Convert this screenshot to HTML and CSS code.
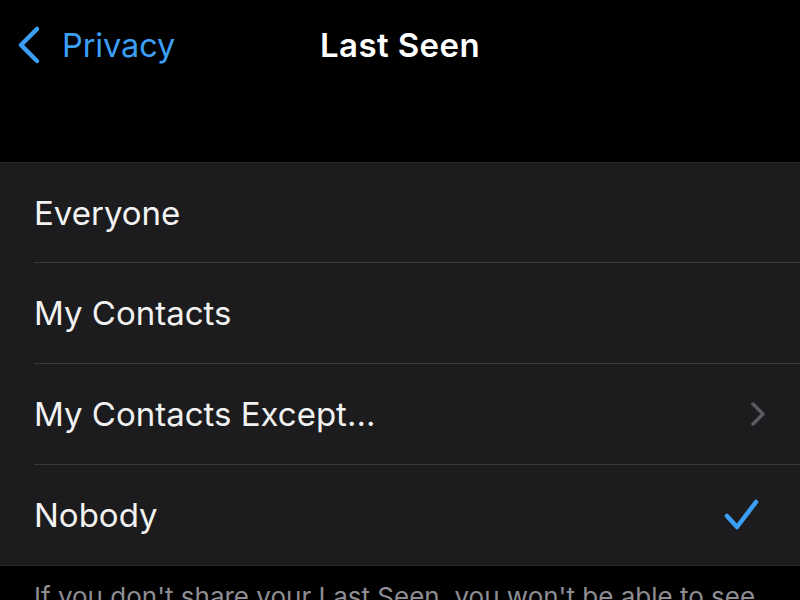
FILE: index.html
```html
<!DOCTYPE html>
<html>

<head>
    <title>Last Seen</title>
    <link rel="stylesheet" href="styles.css">
</head>

<body>
    <nav class="navbar">
        <a class="back" href="#">
            <svg class="back-icon" width="26" height="40" viewBox="0 0 26 40">
                <path d="M21 4 L5 20 L21 36" fill="none" stroke="#3a9ff5" stroke-width="4.5" stroke-linecap="round" stroke-linejoin="round"/>
            </svg>
            <span>Privacy</span>
        </a>
        <h1 class="title">Last Seen</h1>
    </nav>

    <ul class="options">
        <li class="option"><span class="label">Everyone</span></li>
        <li class="option"><span class="label">My Contacts</span></li>
        <li class="option">
            <span class="label">My Contacts Except...</span>
            <svg class="chevron" width="16" height="26" viewBox="0 0 16 26">
                <path d="M3 3 L13 13 L3 23" fill="none" stroke="#5a5a5f" stroke-width="3.5" stroke-linecap="round" stroke-linejoin="round"/>
            </svg>
        </li>
        <li class="option">
            <span class="label">Nobody</span>
            <svg class="check" width="38" height="34" viewBox="0 0 38 34">
                <path d="M4 18 L14 29 L33 4" fill="none" stroke="#3a9ff5" stroke-width="4.5" stroke-linecap="round" stroke-linejoin="round"/>
            </svg>
        </li>
    </ul>

    <p class="note">If you don't share your Last Seen, you won't be able to see other people's Last Seen.</p>
</body>

</html>
```

FILE: styles.css
```css
body {
    margin: 0;
    background-color: #000;
    font-family: Inter, "Liberation Sans", sans-serif;
    overflow: hidden;
}

.navbar {
    height: 162px;
    position: relative;
    box-sizing: border-box;
    padding-top: 24px;
}

.back {
    display: flex;
    align-items: center;
    gap: 20px;
    padding-left: 16px;
    color: #3a9ff5;
    text-decoration: none;
    font-size: 32.5px;
    letter-spacing: -0.1px;
    height: 42px;
}

.title {
    position: absolute;
    top: 24px;
    left: 0;
    right: 0;
    margin: 0;
    height: 42px;
    line-height: 42px;
    text-align: center;
    color: #fff;
    font-size: 33px;
    font-weight: 600;
    letter-spacing: 0.4px;
}

.options {
    list-style-type: none;
    margin: 0;
    padding: 0 0 0 34px;
    background-color: #1c1c1e;
    border-top: 1px solid #2c2c2e;
    border-bottom: 1px solid #2c2c2e;
}

.option {
    height: 100px;
    display: flex;
    align-items: center;
    justify-content: space-between;
    padding-right: 36px;
    border-bottom: 1px solid #38383a;
    color: #f2f2f2;
    font-size: 33px;
    letter-spacing: 0;
}

.option:first-child {
    height: 99px;
}

.option:last-child {
    border-bottom: none;
}

.chevron {
    margin-right: -2px;
}

.check {
    margin-right: 3px;
}

.note {
    margin: 14px 34px 0;
    color: #8d8d93;
    font-size: 26px;
    line-height: 34px;
}
```
